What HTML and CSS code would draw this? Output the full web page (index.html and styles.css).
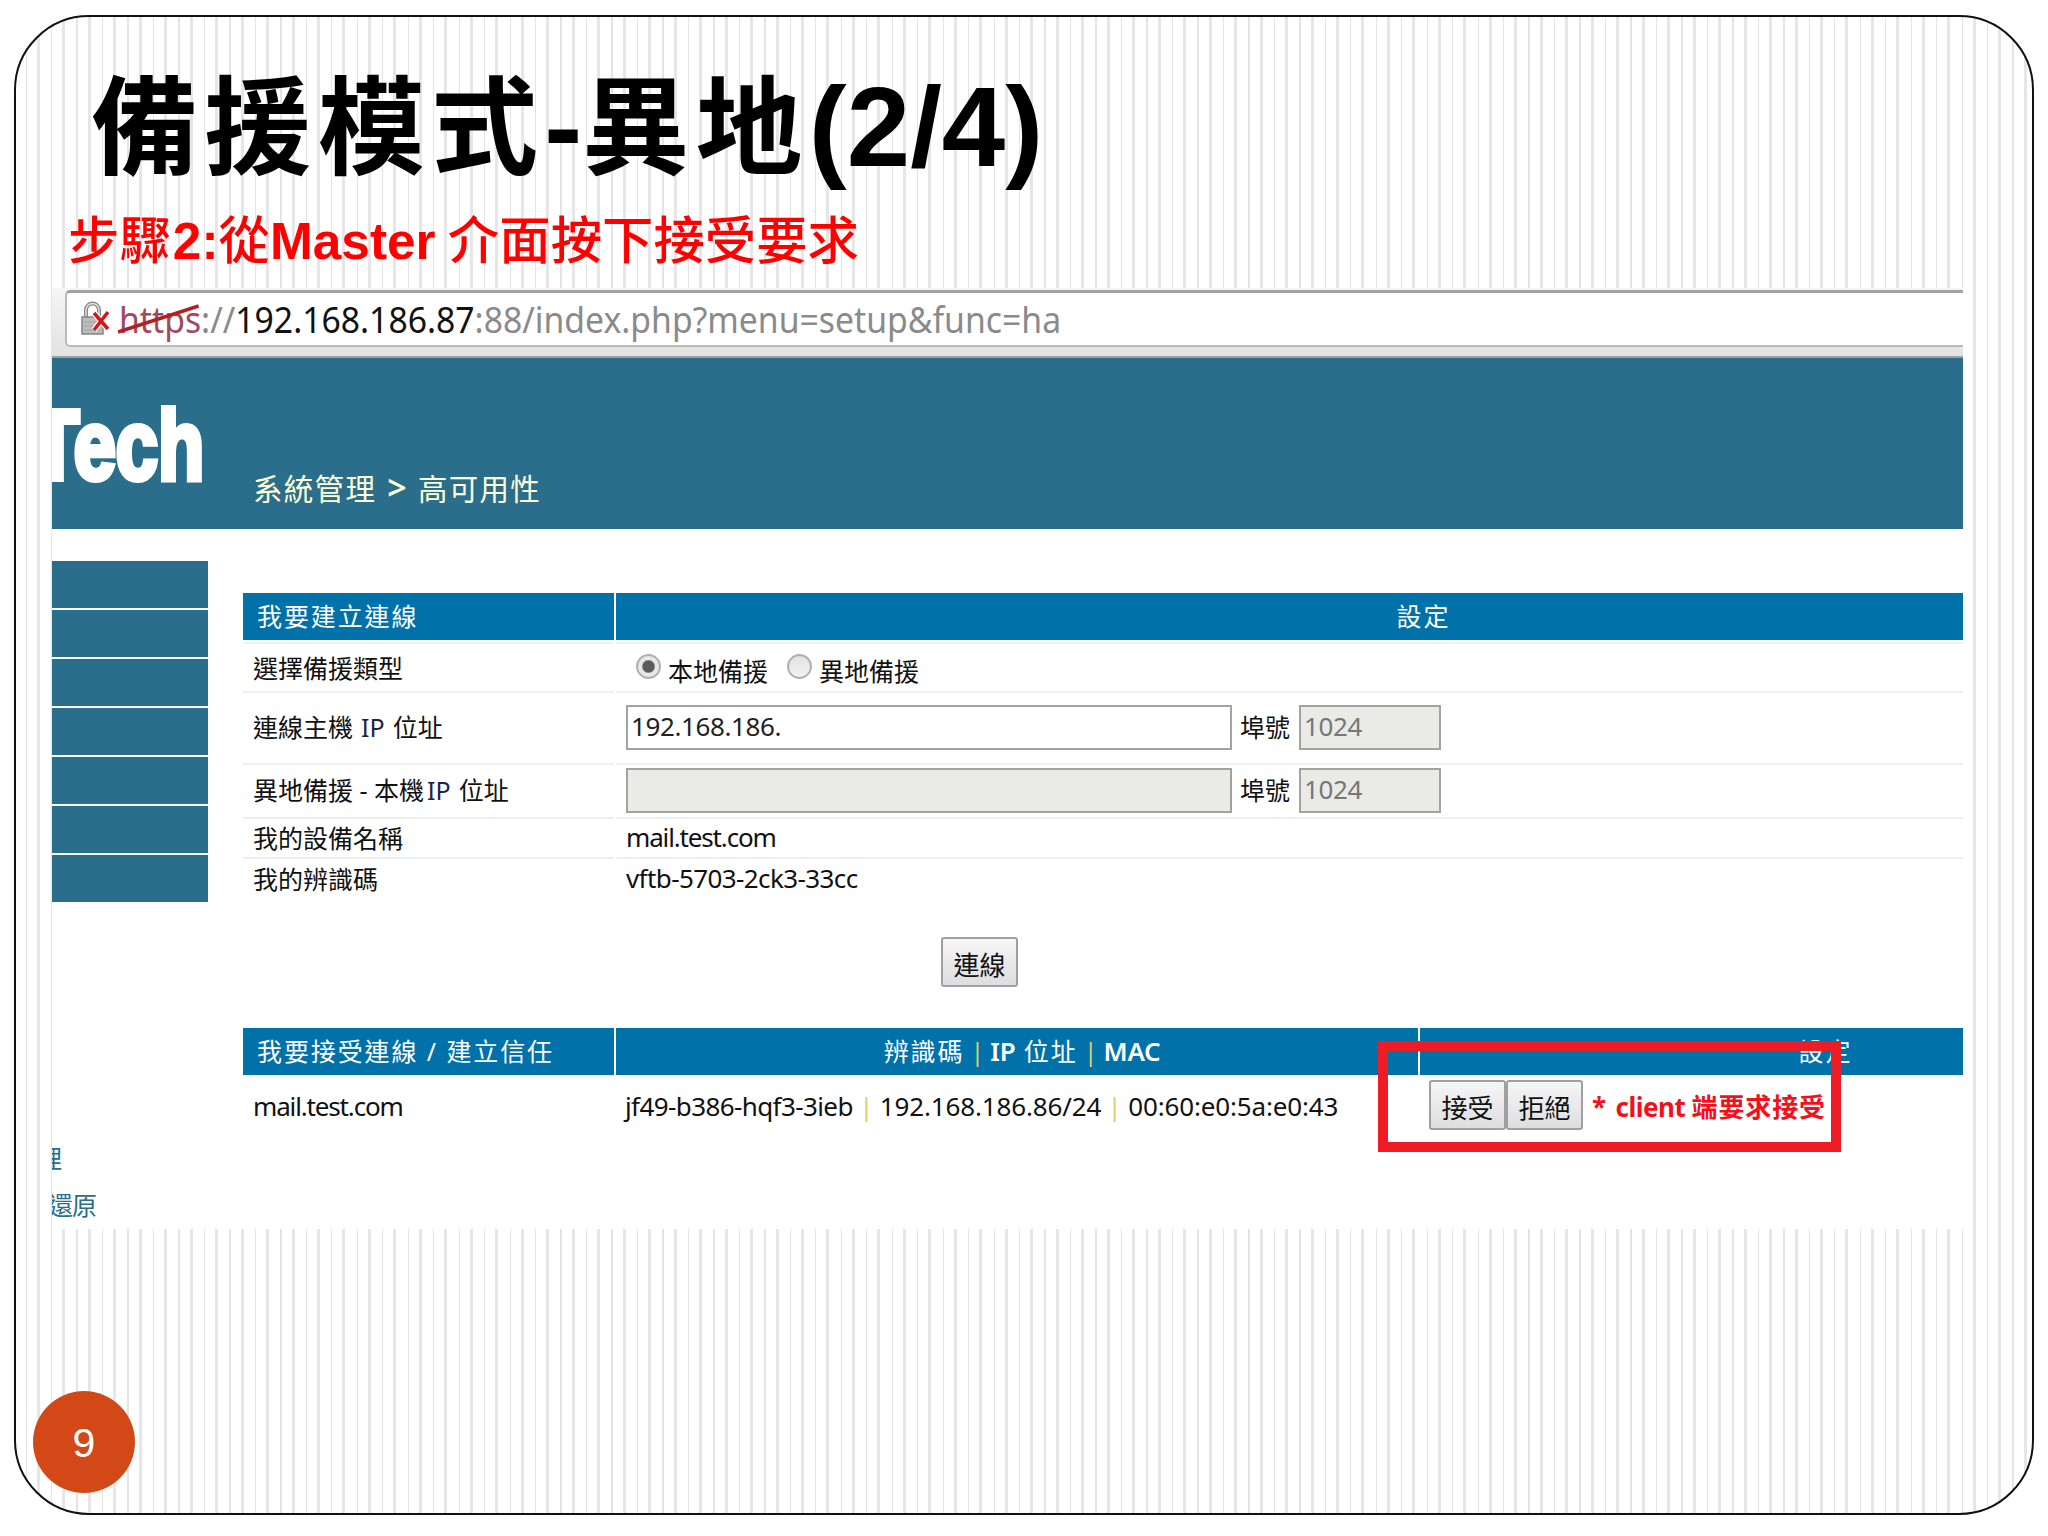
FILE: index.html
```html
<!DOCTYPE html>
<html lang="zh-Hant">
<head>
    <meta charset="UTF-8">
    <title>備援模式-異地(2/4)</title>
    <link rel="stylesheet" href="styles.css">
</head>
<body>
    <div class="slide">
        <h1 class="title"><span class="cjk">備援模式</span>-<span class="cjk">異地</span>(2/4)</h1>
        <p class="step"><span class="cjk">步驟</span>2:<span class="cjk">從</span>Master <span class="cjk">介面按下接受要求</span></p>

        <div class="shot">
            <div class="address-bar">
                <div class="omnibox">
                    <svg class="lock" width="32" height="36" viewBox="0 0 32 36">
                        <path d="M5 16V9a6.500 6.500 0 0 1 13 0v7" fill="none" stroke="#888" stroke-width="4"/>
                        <path d="M5 16V9a6.500 6.500 0 0 1 13 0v7" fill="none" stroke="#ddd" stroke-width="1.500"/>
                        <rect x="1" y="16" width="21" height="17" fill="#bdbdbd" stroke="#858585" stroke-width="1.500"/>
                        <path d="M3 21h17M3 25h17M3 29h17" stroke="#a5a5a5"/>
                        <path d="M13 12L27 28M27 11L13 29" stroke="#fff" stroke-width="6"/>
                        <path d="M13 12L27 28M27 11L13 29" stroke="#d01818" stroke-width="3.500"/>
                    </svg>
                    <div class="url"><span class="scheme">https<svg class="strike" viewBox="0 0 86 30" preserveAspectRatio="none"><path d="M1 28L85 2" stroke="#b32020" stroke-width="3.500"/></svg></span>://<span class="host">192.168.186.87</span>:88/index.php?menu=setup&amp;func=ha</div>
                </div>
            </div>

            <div class="banner">
                <div class="logo">Tech</div>
                <div class="breadcrumb">系統管理<b>&gt;</b>高可用性</div>
            </div>

            <div class="page">
                <div class="sidebar">
                    <div class="menu-item"></div>
                    <div class="menu-item"></div>
                    <div class="menu-item"></div>
                    <div class="menu-item"></div>
                    <div class="menu-item"></div>
                    <div class="menu-item"></div>
                    <div class="menu-item"></div>
                    <div class="link link-first">理</div>
                    <div class="link">還原</div>
                </div>

                <div class="content">
                    <div class="row head">
                        <div>我要建立連線</div>
                        <div class="center">設定</div>
                    </div>
                    <div class="row type">
                        <div>選擇備援類型</div>
                        <div class="radios">
                            <span class="radio checked"></span><span>本地備援</span>
                            <span class="radio"></span><span>異地備援</span>
                        </div>
                    </div>
                    <div class="row remote">
                        <div>連線主機 <span class="thin">IP</span> 位址</div>
                        <div>
                            <input class="ip" type="text" value="192.168.186.">
                            <span class="port-label">埠號</span>
                            <input class="port" type="text" value="1024" disabled>
                        </div>
                    </div>
                    <div class="row local">
                        <div>異地備援 - 本機<span class="thin">IP</span> 位址</div>
                        <div>
                            <input class="ip" type="text" disabled>
                            <span class="port-label">埠號</span>
                            <input class="port" type="text" value="1024" disabled>
                        </div>
                    </div>
                    <div class="row device">
                        <div>我的設備名稱</div>
                        <div class="name">mail.test.com</div>
                    </div>
                    <div class="row code">
                        <div>我的辨識碼</div>
                        <div class="ident">vftb-5703-2ck3-33cc</div>
                    </div>

                    <button class="btn connect">連線</button>

                    <div class="row three head">
                        <div>我要接受連線 / 建立信任</div>
                        <div class="center codes">辨識碼<i>|</i><b>IP</b>&nbsp;位址<i>|</i><b>MAC</b></div>
                        <div class="center">設定</div>
                    </div>
                    <div class="row three request">
                        <div class="name">mail.test.com</div>
                        <div class="peer"><span class="ident">jf49-b386-hqf3-3ieb</span><i>|</i><span>192.168.186.86/24</span><i>|</i><span>00:60:e0:5a:e0:43</span></div>
                        <div class="actions">
                            <button class="btn">接受</button><button class="btn">拒絕</button>
                            <span class="note"><span class="star">*</span>client <span class="ask">端要求接受</span></span>
                            <div class="highlight"></div>
                        </div>
                    </div>
                </div>
            </div>
        </div>

        <div class="page-number">9</div>
    </div>
</body>
</html>
```
FILE: styles.css
```css
* {
    box-sizing: border-box;
}

body {
    margin: 0;
    padding: 15px 14px;
    background: #fff;
    font-family: "Noto Sans", "Noto Sans CJK TC", sans-serif;
}

/* Slide frame with pinstripes */
.slide {
    width: 2020px;
    height: 1500px;
    border: 2px solid #111;
    border-radius: 75px;
    overflow: hidden;
    background: repeating-linear-gradient(90deg,
        #fff 0, #fff 9.5px,
        #e4e4e6 9.5px, #e4e4e6 10.8px,
        #fff 10.8px, #fff 20.8px,
        #e6e6e8 20.8px, #e6e6e8 23.8px,
        #fff 23.8px, #fff 25.474px);
}

.title {
    margin: 45px 0 0 75px;
    height: 130px;
    line-height: 130px;
    font-family: "Liberation Sans", "Noto Sans CJK TC", sans-serif;
    font-size: 114px;
    font-weight: bold;
    white-space: nowrap;
}

.title .cjk {
    font-size: 107px;
    letter-spacing: 6.3px;
}

.step {
    margin: 19px 0 0 52px;
    height: 77px;
    line-height: 60px;
    font-family: "Liberation Sans", "Noto Sans CJK TC", sans-serif;
    font-size: 51.4px;
    font-weight: bold;
    color: #f00;
    white-space: nowrap;
}

.step .cjk {
    font-weight: 500;
}

.step .cjk:first-child {
    margin-right: 2px;
}

.step .cjk:last-child {
    margin-left: -2px;
}

/* Browser capture */
.shot {
    width: 1911px;
    height: 941px;
    margin-left: 36px;
    background: #fff;
    overflow: hidden;
}

.address-bar {
    height: 70px;
    padding: 2px 0 0 13px;
    background: linear-gradient(#f6f6f6, #e2e2e2);
    border-bottom: 2px solid #a0a0a0;
}

.omnibox {
    display: flex;
    align-items: center;
    height: 57px;
    padding-left: 14px;
    background: #fff;
    border: 2px solid #bbb;
    border-top: 3px solid #a3a1a3;
    border-right: none;
    border-radius: 5px 0 0 5px;
}

.lock {
    margin-right: 6px;
}

.url {
    padding-top: 2px;
    font-size: 36px;
    line-height: 50px;
    color: #8a8a8a;
    white-space: nowrap;
    transform: scaleX(0.937);
    transform-origin: left;
}

.scheme {
    position: relative;
    color: #a04a62;
}

.strike {
    position: absolute;
    left: -2px;
    top: 9px;
    width: 88px;
    height: 30px;
}

.host {
    color: #111;
}

.banner {
    display: flex;
    height: 171px;
    background: #2a6e8b;
}

.logo {
    width: 220px;
    margin-left: -19px;
    padding-top: 29px;
    font-family: "Liberation Sans", sans-serif;
    font-size: 99px;
    font-weight: bold;
    line-height: 116px;
    color: #fff;
    -webkit-text-stroke: 6px #fff;
    transform: scaleX(0.765);
    transform-origin: left;
}

.breadcrumb {
    padding-top: 109px;
    font-size: 29.5px;
    line-height: 44px;
    letter-spacing: 1.3px;
    color: #ffffd8;
    white-space: nowrap;
}

.breadcrumb b {
    margin: 0 10px 0 11px;
    font-size: 34px;
    line-height: 30px;
    font-weight: 600;
}

.page {
    display: flex;
    gap: 35px;
}

.sidebar {
    flex: none;
    width: 156px;
    padding-top: 32px;
    overflow: hidden;
}

.menu-item {
    height: 47px;
    margin-bottom: 2px;
    background: #2a6e8b;
}

.link {
    height: 47px;
    margin-left: -4px;
    line-height: 47px;
    font-size: 25px;
    letter-spacing: -1px;
    color: #2a6e8b;
}

.link-first {
    margin: 233px 0 0 -15px;
}

/* Tables run past the right edge of the capture */
.content {
    flex: none;
    width: 1987px;
    padding-top: 64px;
    font-size: 25px;
    line-height: 36px;
    color: #111;
    white-space: nowrap;
}

.row {
    display: grid;
    grid-template-columns: 371px 1fr;
    column-gap: 2px;
}

.row.three {
    grid-template-columns: 371px 802px 1fr;
}

.row > div {
    display: flex;
    align-items: center;
    padding-left: 10px;
    border-bottom: 2px solid #efeff0;
}

.head {
    height: 47px;
}

.row.head > div {
    padding: 0 0 1px 14px;
    background: #0071a9;
    border: none;
    color: #fff;
    letter-spacing: 1.9px;
}

.row.head > .center {
    justify-content: center;
    padding-left: 1px;
}

.row.head > .codes {
    padding-left: 10px;
}

.head b {
    font-size: 26px;
    font-weight: 600;
    letter-spacing: -0.3px;
}

.head i {
    width: 26px;
    text-align: center;
    letter-spacing: 0;
}

i {
    font-style: normal;
    color: #d8d070;
}

.type {
    height: 51px;
    margin-top: 2px;
}

.row.type > div {
    border-top: 2px solid #f1f1f2;
}

.remote {
    height: 72px;
}

.local {
    height: 54px;
}

.remote > div,
.local > div {
    padding-bottom: 2px;
}

.device {
    height: 40px;
}

.code {
    height: 40px;
}

.row.code > div,
.row.request > div {
    border: none;
}

.thin {
    margin: 0 8px;
    color: #224;
}

.local .thin {
    margin-left: 3px;
}

.row .name {
    padding-bottom: 2px;
    font-size: 26px;
    letter-spacing: -1.15px;
}

.row .ident {
    padding-bottom: 2px;
    font-size: 26px;
    letter-spacing: -0.6px;
}

.radios span {
    padding-top: 7px;
}

.radios .radio {
    width: 25px;
    height: 25px;
    margin: 0 7px 2px 10px;
    padding: 0;
    border: 2px solid #b0b0b0;
    border-radius: 50%;
    background: linear-gradient(#e2e2e2, #f2f2f2);
}

.radios span + .radio {
    margin-left: 19px;
}

.radios .checked {
    background: radial-gradient(circle, #5c5c5c 0 5.5px, #e8e8e8 7px);
}

input {
    height: 45px;
    padding: 0 4px 2px 3px;
    border: 2px solid #a2a2a2;
    background: #fff;
    font-family: "Noto Sans", sans-serif;
    font-size: 26px;
    letter-spacing: -0.4px;
    color: #222;
}

input:disabled {
    background: #eaeae6;
    color: #777;
}

.ip {
    width: 606px;
}

.port {
    width: 142px;
}

.port-label {
    width: 67px;
    padding-left: 8px;
}

.btn {
    flex: none;
    width: 77px;
    height: 50px;
    padding: 2px 0 0;
    border: 2px solid #a0a0a2;
    border-radius: 3px;
    background: linear-gradient(#f6f6f7, #dedee1);
    font-family: "Noto Sans CJK TC", sans-serif;
    font-size: 26px;
    color: #111;
}

.connect {
    display: block;
    margin: 38px 0 41px 698px;
}

.request {
    height: 66px;
}

.row.request > .name {
    padding-bottom: 4px;
}

.peer {
    margin-left: -1px;
}

.row.request > .peer {
    padding-bottom: 4px;
}

.request .peer span {
    padding-bottom: 0;
    font-size: 26px;
}

.peer .ident ~ span {
    letter-spacing: -0.15px;
}

.request i {
    width: 27px;
    text-align: center;
}

.row .actions {
    position: relative;
    padding: 0 0 6px 9px;
}

.request .note {
    padding: 4px 0 0 9px;
    font-size: 26px;
    font-weight: bold;
    letter-spacing: -0.5px;
    color: #f3101c;
}

.star {
    margin-right: 10px;
}

.ask {
    letter-spacing: 0.9px;
}

/* Red callout around the accept / reject buttons */
.highlight {
    position: absolute;
    left: -42px;
    top: -34px;
    width: 463px;
    height: 111px;
    border: 10px solid #ee1c25;
}

/* Slide number */
.page-number {
    width: 102px;
    height: 102px;
    margin: 162px 0 0 17px;
    border-radius: 50%;
    background: #d34817;
    font-family: "Liberation Sans", sans-serif;
    font-size: 41px;
    line-height: 104px;
    text-align: center;
    color: #fff;
}
```
